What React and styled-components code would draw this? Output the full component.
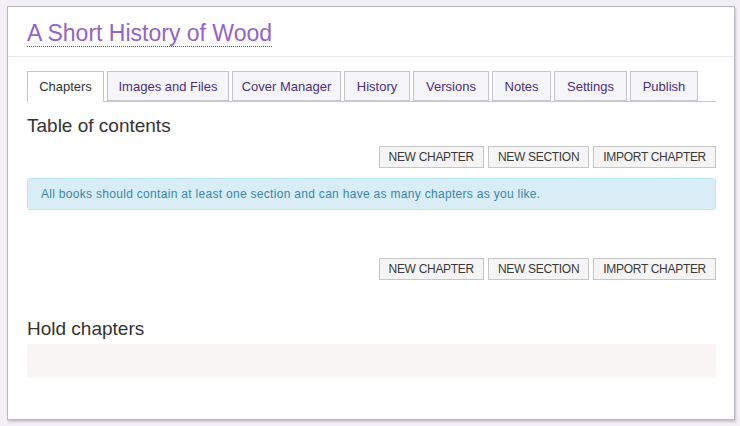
import React from "react"
import styled, { createGlobalStyle } from "styled-components"

const GlobalStyle = createGlobalStyle`
  html, body {
    margin: 0;
    padding: 0;
    background: #f2f0f6;
    font-family: "Liberation Sans", Arial, sans-serif;
  }
`

const Page = styled.div`
  padding: 6px 5px 6px 7px;
`

const Panel = styled.div`
  background: #fff;
  border: 1px solid #b9b7c0;
  box-shadow: 1px 2px 2px rgba(0, 0, 0, 0.18);
  height: 414px;
  box-sizing: border-box;
`

const Header = styled.div`
  box-sizing: border-box;
  padding: 15px 19px 0;
  height: 50px;
  border-bottom: 1px solid #ebebef;
`

const Title = styled.a`
  display: inline-block;
  font-size: 23px;
  line-height: 23px;
  padding-bottom: 1px;
  color: #9264c9;
  text-decoration: none;
  border-bottom: 1px dotted #6a3ca8;
`

const Body = styled.div`
  padding: 14px 18px 0 19px;
`

const Tabs = styled.ul`
  display: flex;
  gap: 3px;
  list-style: none;
  margin: 0;
  padding: 0;
  border-bottom: 1px solid #c8c8cc;
  height: 30px;
`

const Tab = styled.li`
  width: ${p => p.w}px;
  height: ${p => (p.active ? "31px" : "30px")};
  box-sizing: border-box;
  border: 1px solid #c5c5cb;
  border-bottom: ${p => (p.active ? "none" : "1px solid #c5c5cb")};
  background: ${p => (p.active ? "#fff" : "#f6f5f9")};
  color: ${p => (p.active ? "#333" : "#4b2f82")};
  font-size: 13px;
  line-height: 30px;
  text-align: center;
  white-space: nowrap;
`

const Heading = styled.h2`
  margin: ${p => p.top}px 0 0;
  font-size: 19px;
  font-weight: normal;
  color: #333;
  line-height: 22px;
`

const ButtonRow = styled.div`
  display: flex;
  justify-content: flex-end;
  gap: 4px;
  margin-top: ${p => p.top}px;
`

const Button = styled.button`
  height: 22px;
  box-sizing: border-box;
  padding: 0 9px;
  border: 1px solid #c6c6c6;
  background: #f5f5f5;
  color: #3a3a3a;
  font-family: "Liberation Sans", Arial, sans-serif;
  font-size: 12px;
  letter-spacing: -0.3px;
  cursor: pointer;
`

const Alert = styled.div`
  margin-top: 10px;
  height: 32px;
  box-sizing: border-box;
  padding: 0 13px;
  background: #d9edf7;
  border: 1px solid #bce8f1;
  border-radius: 3px;
  color: #3a87ad;
  font-size: 12px;
  letter-spacing: 0.3px;
  line-height: 30px;
`

const HoldBox = styled.div`
  margin-top: 4px;
  height: 34px;
  background: #faf6f6;
`

const tabs = [
  { label: "Chapters", w: 77, active: true },
  { label: "Images and Files", w: 122 },
  { label: "Cover Manager", w: 109 },
  { label: "History", w: 66 },
  { label: "Versions", w: 76 },
  { label: "Notes", w: 59 },
  { label: "Settings", w: 73 },
  { label: "Publish", w: 68 },
]

const Actions = ({ top }) => (
  <ButtonRow top={top}>
    <Button>NEW CHAPTER</Button>
    <Button>NEW SECTION</Button>
    <Button>IMPORT CHAPTER</Button>
  </ButtonRow>
)

export default function App() {
  return (
    <>
      <GlobalStyle />
      <Page>
        <Panel>
          <Header>
            <Title href="#">A Short History of Wood</Title>
          </Header>
          <Body>
            <Tabs>
              {tabs.map(t => (
                <Tab key={t.label} active={t.active} w={t.w}>
                  {t.label}
                </Tab>
              ))}
            </Tabs>
            <Heading top={13}>Table of contents</Heading>
            <Actions top={9} />
            <Alert>
              All books should contain at least one section and can have as many chapters as you like.
            </Alert>
            <Actions top={48} />
            <Heading top={38}>Hold chapters</Heading>
            <HoldBox />
          </Body>
        </Panel>
      </Page>
    </>
  )
}
